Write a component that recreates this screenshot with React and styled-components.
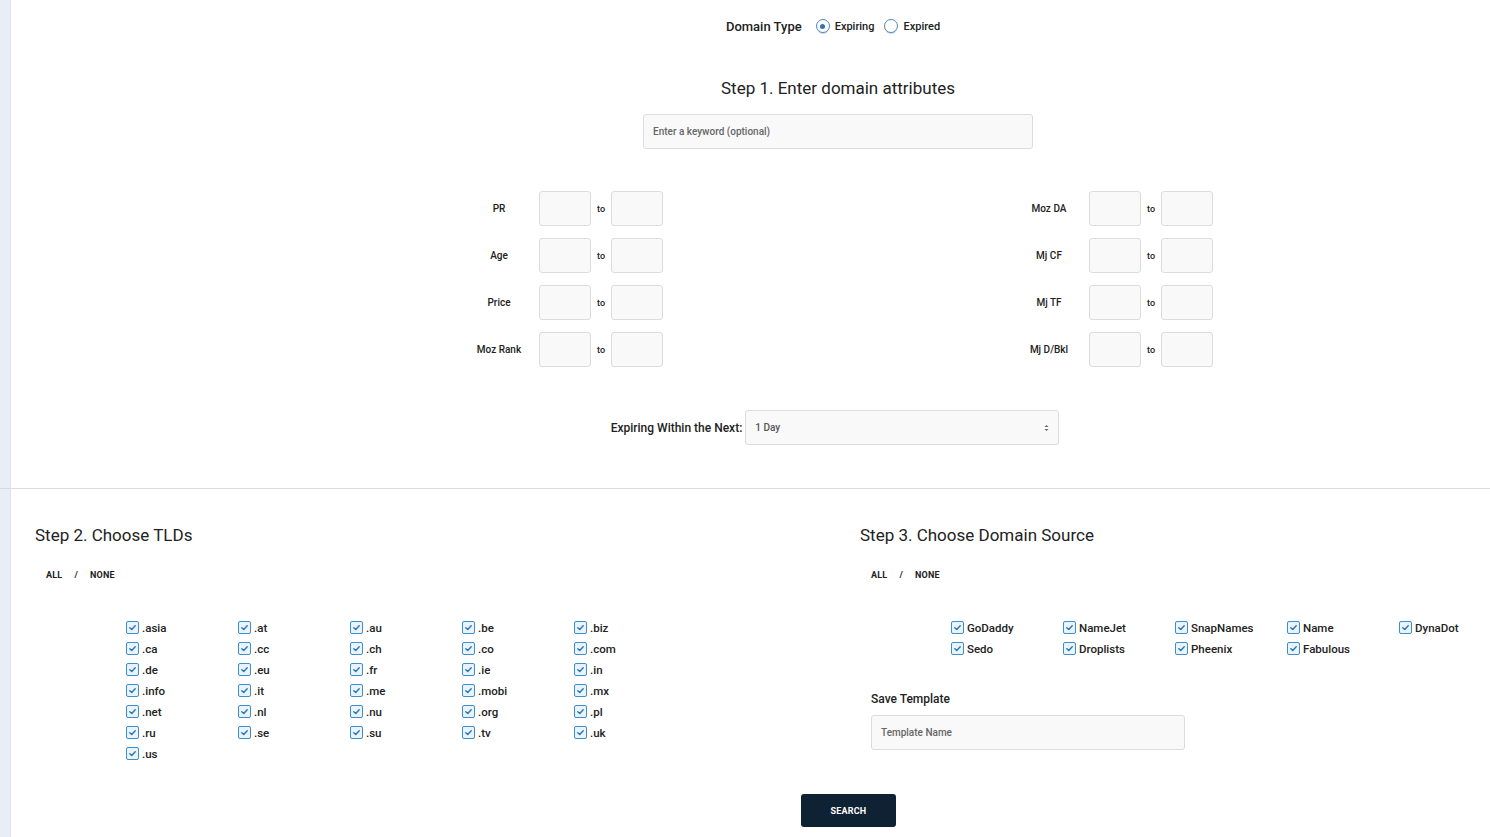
import React from 'react';
import styled, { createGlobalStyle } from 'styled-components';

const GlobalStyle = createGlobalStyle`
  html, body { margin: 0; padding: 0; background: #fff; }
  body { font-family: Roboto, "Noto Sans", sans-serif; color: #222; }
  * { box-sizing: border-box; }
`;

const Page = styled.div`
  display: flex;
  min-height: 837px;
  width: 1490px;
  overflow: hidden;
`;

const SideStrip = styled.div`
  width: 11px;
  flex: 0 0 11px;
  background: linear-gradient(
    to bottom,
    #e9edf6 0,
    #e9edf6 488px,
    #d3d8e2 488px,
    #d3d8e2 489px,
    #e9edf6 489px
  );
  border-right: 1px solid #dde2ec;
`;

const Main = styled.div`
  flex: 1;
  display: flex;
  flex-direction: column;
`;

const TopSection = styled.section`
  padding: 16px 0 43px 154px;
  display: flex;
  flex-direction: column;
  align-items: center;
  border-bottom: 1px solid #dcdcdc;
`;

const DomainTypeRow = styled.div`
  display: flex;
  align-items: center;
  height: 20px;
  font-size: 13px;
  font-weight: 500;
`;

const DomainTypeLabel = styled.span`
  margin-right: 14px;
`;

const RadioLabel = styled.label`
  display: flex;
  align-items: center;
  font-size: 11px;
  font-weight: 500;
  margin-right: 10px;
`;

const RadioCircle = styled.span`
  position: relative;
  width: 14px;
  height: 14px;
  border-radius: 50%;
  border: 1px solid #4f86b8;
  background: #fff;
  margin-right: 5px;
  box-shadow: 0 2px 0 -1px #c9d9ea;
  &::after {
    content: '';
    position: absolute;
    left: 3.5px;
    top: 3.5px;
    width: 5px;
    height: 5px;
    border-radius: 50%;
    background: ${(p) => (p.checked ? '#2f73b4' : 'transparent')};
  }
`;

const StepTitle = styled.h2`
  margin: 0;
  font-size: 17px;
  font-weight: 400;
  line-height: 22px;
  color: #222;
`;

const CenterTitle = styled(StepTitle)`
  margin-top: 41px;
`;

const TextInput = styled.input`
  width: ${(p) => p.$w || 390}px;
  height: 35px;
  border: 1px solid #dcdcdc;
  border-radius: 3px;
  background: #f9f9f9;
  padding: 0 9px;
  font-family: Roboto, sans-serif;
  font-size: 10px;
  font-weight: 500;
  color: #555;
  outline: none;
  &::placeholder { color: #666; }
`;

const KeywordInput = styled(TextInput)`
  margin-top: 15px;
`;

const RangeGrid = styled.div`
  margin-top: 42px;
  width: 744px;
  margin-left: 6px;
  display: flex;
  justify-content: space-between;
`;

const RangeColumn = styled.div`
  display: flex;
  flex-direction: column;
  gap: 12px;
`;

const RangeRow = styled.div`
  display: flex;
  align-items: center;
  height: 35px;
`;

const RangeLabel = styled.span`
  width: 60px;
  text-align: center;
  font-size: 10px;
  font-weight: 500;
  margin-right: 10px;
`;

const SmallBox = styled.input`
  width: 52px;
  height: 35px;
  border: 1px solid #dcdcdc;
  border-radius: 3px;
  background: #f9f9f9;
  outline: none;
`;

const ToText = styled.span`
  width: 20px;
  text-align: center;
  font-size: 9px;
  font-weight: 500;
`;

const ExpiringRow = styled.div`
  margin-top: 43px;
  display: flex;
  align-items: center;
  margin-right: 6px;
`;

const ExpiringLabel = styled.span`
  font-size: 12px;
  font-weight: 500;
  margin-right: 3px;
`;

const SelectBox = styled.div`
  width: 314px;
  height: 35px;
  border: 1px solid #dcdcdc;
  border-radius: 3px;
  background: #f9f9f9;
  display: flex;
  align-items: center;
  justify-content: space-between;
  padding: 0 9px;
  font-size: 10px;
  font-weight: 500;
  color: #555;
`;

const BottomSection = styled.section`
  display: grid;
  grid-template-columns: 825px 1fr;
  padding-top: 35px;
`;

const Column = styled.div`
  padding-left: 24px;
`;

const AllNone = styled.div`
  margin: 24px 0 0 11px;
  font-size: 9px;
  font-weight: 700;
  color: #222;
  letter-spacing: 0.2px;
  span { margin: 0 12px; }
`;

const CheckGrid = styled.div`
  margin: 37px 0 0 91px;
  display: grid;
  grid-template-columns: repeat(5, 112px);
  grid-auto-rows: 21px;
`;

const CheckItem = styled.label`
  display: flex;
  align-items: center;
  font-size: 11.5px;
  font-weight: 500;
  color: #222;
  white-space: nowrap;
`;

const CheckBox = styled.span`
  width: 13px;
  height: 13px;
  border: 1px solid #3d8ecb;
  border-radius: 2px;
  background: #e9f3fb;
  display: flex;
  align-items: center;
  justify-content: center;
  margin-right: 3px;
`;

const SaveLabel = styled.div`
  margin: 33px 0 0 11px;
  font-size: 12px;
  font-weight: 500;
`;

const TemplateInput = styled(TextInput)`
  margin: 9px 0 0 11px;
  display: block;
`;

const ButtonRow = styled.div`
  display: flex;
  padding-left: 790px;
  margin-top: 30px;
`;

const SearchButton = styled.button`
  width: 95px;
  height: 33px;
  border: none;
  border-radius: 3px;
  background: #0e2233;
  color: #fff;
  font-family: Roboto, sans-serif;
  font-size: 9px;
  font-weight: 700;
  letter-spacing: 0.2px;
`;

const Check = () => (
  <svg width="9" height="9" viewBox="0 0 10 10">
    <path d="M2 5.2 L4.2 7.2 L8 3" fill="none" stroke="#2f77b5" strokeWidth="1.6" strokeLinecap="round" strokeLinejoin="round" />
  </svg>
);

const leftRanges = ['PR', 'Age', 'Price', 'Moz Rank'];
const rightRanges = ['Moz DA', 'Mj CF', 'Mj TF', 'Mj D/Bkl'];

const tlds = [
  '.asia', '.at', '.au', '.be', '.biz',
  '.ca', '.cc', '.ch', '.co', '.com',
  '.de', '.eu', '.fr', '.ie', '.in',
  '.info', '.it', '.me', '.mobi', '.mx',
  '.net', '.nl', '.nu', '.org', '.pl',
  '.ru', '.se', '.su', '.tv', '.uk',
  '.us',
];

const sources = ['GoDaddy', 'NameJet', 'SnapNames', 'Name', 'DynaDot', 'Sedo', 'Droplists', 'Pheenix', 'Fabulous'];

function Ranges({ labels }) {
  return (
    <RangeColumn>
      {labels.map((l) => (
        <RangeRow key={l}>
          <RangeLabel>{l}</RangeLabel>
          <SmallBox />
          <ToText>to</ToText>
          <SmallBox />
        </RangeRow>
      ))}
    </RangeColumn>
  );
}

function CheckList({ items }) {
  return (
    <CheckGrid>
      {items.map((t) => (
        <CheckItem key={t}>
          <CheckBox><Check /></CheckBox>
          {t}
        </CheckItem>
      ))}
    </CheckGrid>
  );
}

export default function App() {
  return (
    <>
      <GlobalStyle />
      <Page>
        <SideStrip />
        <Main>
          <TopSection>
            <DomainTypeRow>
              <DomainTypeLabel>Domain Type</DomainTypeLabel>
              <RadioLabel><RadioCircle checked />Expiring</RadioLabel>
              <RadioLabel><RadioCircle />Expired</RadioLabel>
            </DomainTypeRow>
            <CenterTitle>Step 1. Enter domain attributes</CenterTitle>
            <KeywordInput placeholder="Enter a keyword (optional)" />
            <RangeGrid>
              <Ranges labels={leftRanges} />
              <Ranges labels={rightRanges} />
            </RangeGrid>
            <ExpiringRow>
              <ExpiringLabel>Expiring Within the Next:</ExpiringLabel>
              <SelectBox>
                <span>1 Day</span>
                <svg width="5" height="8" viewBox="0 0 5 8">
                  <path d="M0.5 3 L2.5 1 L4.5 3 Z M0.5 5 L2.5 7 L4.5 5 Z" fill="#666" />
                </svg>
              </SelectBox>
            </ExpiringRow>
          </TopSection>
          <BottomSection>
            <Column>
              <StepTitle>Step 2. Choose TLDs</StepTitle>
              <AllNone>ALL<span>/</span>NONE</AllNone>
              <CheckList items={tlds} />
            </Column>
            <Column>
              <StepTitle>Step 3. Choose Domain Source</StepTitle>
              <AllNone>ALL<span>/</span>NONE</AllNone>
              <CheckList items={sources} />
              <SaveLabel>Save Template</SaveLabel>
              <TemplateInput $w={314} placeholder="Template Name" />
            </Column>
          </BottomSection>
          <ButtonRow>
            <SearchButton>SEARCH</SearchButton>
          </ButtonRow>
        </Main>
      </Page>
    </>
  );
}
